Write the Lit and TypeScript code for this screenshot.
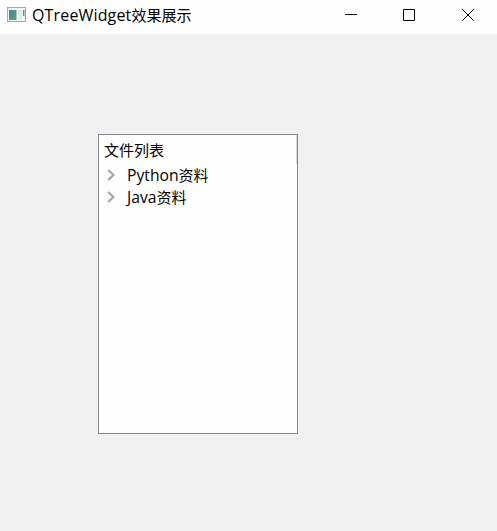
import { LitElement, html, css, svg } from "lit";
import { customElement, property } from "lit/decorators.js";

const windowIcon = html`<svg class="app-icon" width="20" height="16" viewBox="0 0 20 16">
  <defs>
    <linearGradient id="pane" x1="0" y1="0" x2="1" y2="1">
      <stop offset="0" stop-color="#4d7fa0" />
      <stop offset="1" stop-color="#55a583" />
    </linearGradient>
  </defs>
  <rect x="0.5" y="0.5" width="18" height="14" fill="#f3f4f4" stroke="#a3a8ad" />
  <rect x="2" y="3" width="7.5" height="10" fill="url(#pane)" />
  <rect x="11" y="3" width="4" height="10" fill="#e6e8e9" />
  <rect x="16" y="3" width="1.5" height="6" fill="url(#pane)" />
</svg>`;

const glyphs = {
  minimize: svg`<path d="M0 5.5H12" />`,
  maximize: svg`<path d="M0.5 0.5H11.5V11.5H0.5Z" />`,
  close: svg`<path d="M0.3 0.3L11.7 11.7M11.7 0.3L0.3 11.7" />`,
};

@customElement("title-bar")
export class TitleBar extends LitElement {
  static styles = css`
    :host {
      display: flex;
      height: 34px;
      box-sizing: border-box;
      background: #fefefe;
      padding-left: 7px;
    }
    .app-icon { margin: 7px 5px 0 0; flex: none; }
    .title { flex: 1; line-height: 20px; padding-top: 5px; white-space: nowrap; }
    .latin { font-size: 16px; letter-spacing: 0.15px; }
    .controls { display: flex; }
    .control { width: 58.5px; height: 30px; display: flex; align-items: center; justify-content: center; }
    .control svg { fill: none; stroke: #000; stroke-width: 1; display: block; }
  `;
  render() {
    return html`${windowIcon}
      <div class="title"><span class="latin">QTreeWidget</span>效果展示</div>
      <div class="controls">
        ${Object.values(glyphs).map(
          (g) => html`<div class="control"><svg width="12" height="12" viewBox="0 0 12 12">${g}</svg></div>`
        )}
      </div>`;
  }
}

@customElement("tree-item")
export class TreeItem extends LitElement {
  @property() name = "";
  static styles = css`
    :host { display: flex; height: 22px; line-height: 22px; align-items: center; white-space: nowrap; }
    .arrow { width: 8px; height: 12px; margin: 0 12px 0 8px; fill: none; stroke: #a6a6a6; stroke-width: 2.2; }
    .latin { font-size: 15.7px; }
  `;
  render() {
    return html`<svg class="arrow" viewBox="0 0 8 12"><path d="M1.2 1L6.4 6L1.2 11" /></svg>
      <span><span class="latin">${this.name}</span>资料</span>`;
  }
}

@customElement("app-root")
export class AppRoot extends LitElement {
  static styles = css`
    :host {
      display: block;
      height: 531px;
      background: #f0f0f0;
      color: #000;
      font: 15px "Open Sans", "Noto Sans CJK SC", sans-serif;
    }
    .tree {
      width: 200px;
      height: 300px;
      box-sizing: border-box;
      margin: 100px 0 0 98px;
      border: 1px solid #828790;
      background: #fefefe;
    }
    .header {
      height: 29px;
      line-height: 30px;
      padding-left: 5px;
      border-right: 1px solid #d8d8d8;
    }
  `;
  render() {
    return html`<title-bar></title-bar>
      <div class="tree">
        <div class="header">文件列表</div>
        <tree-item name="Python"></tree-item>
        <tree-item name="Java"></tree-item>
      </div>`;
  }
}
